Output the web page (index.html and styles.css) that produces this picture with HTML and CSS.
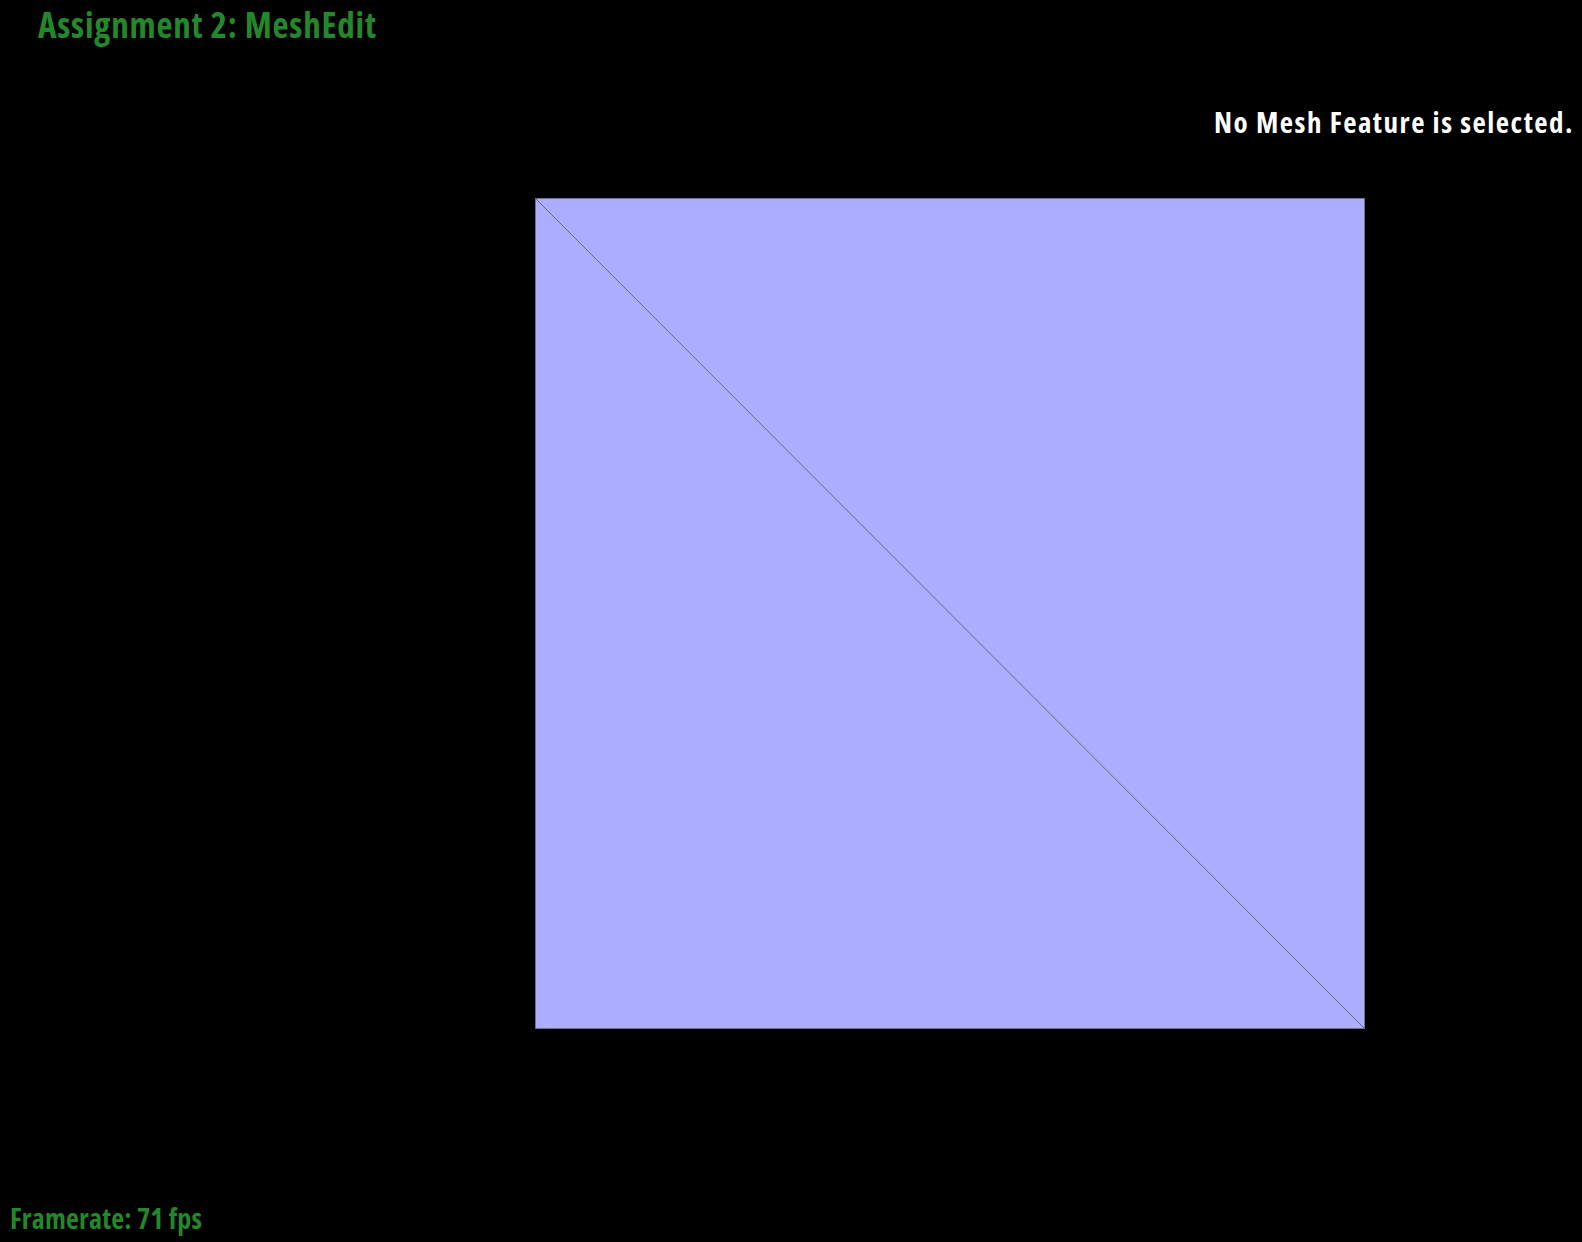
FILE: index.html
```html
<!DOCTYPE html>
<html>
<head>
<meta charset="utf-8">
<title>MeshEdit</title>
<link rel="stylesheet" href="styles.css">
</head>
<body>
<div class="viewport">
  <svg class="mesh" width="830" height="831" viewBox="0 0 830 831">
    <rect x="0.5" y="0.5" width="829" height="830" fill="#adadff" stroke="#6e6e88" stroke-width="1"/>
    <line x1="0.5" y1="0.5" x2="829.5" y2="830.5" stroke="#6a6a80" stroke-width="1"/>
  </svg>
  <h1 class="title">Assignment 2: MeshEdit</h1>
  <div class="info">No Mesh Feature is selected.</div>
  <div class="fps">Framerate: 71 fps</div>
</div>
</body>
</html>
```
FILE: styles.css
```css
html, body {
  margin: 0;
  padding: 0;
  background: #000;
}
.viewport {
  position: relative;
  width: 1582px;
  height: 1242px;
  overflow: hidden;
  background: #000;
  font-family: "Open Sans", "DejaVu Sans", sans-serif;
  font-weight: 700;
  font-stretch: 75%;
}
.mesh {
  position: absolute;
  left: 535px;
  top: 198px;
  display: block;
}
.title {
  position: absolute;
  left: 38px;
  top: 0;
  margin: 0;
  font-size: 35px;
  line-height: 50px;
  font-weight: 700;
  letter-spacing: 0.8px;
  color: #23872b;
}
.info {
  position: absolute;
  right: 8px;
  top: 100px;
  font-size: 29px;
  line-height: 44px;
  letter-spacing: 1.5px;
  color: #fff;
}
.fps {
  position: absolute;
  left: 10px;
  top: 1196px;
  font-size: 28px;
  line-height: 44px;
  letter-spacing: 0.2px;
  color: #23872b;
}
```
